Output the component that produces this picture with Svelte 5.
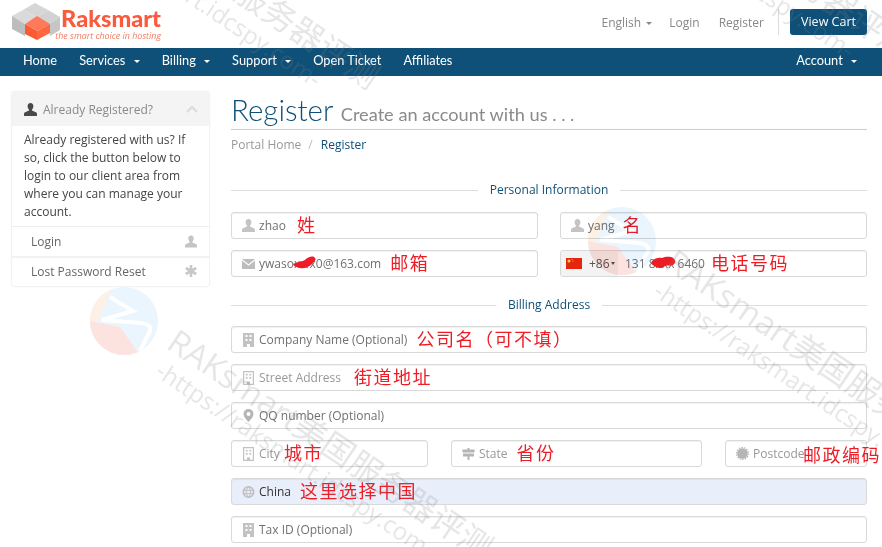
<script>
	// watermark stamps, x/y = top-left of the rotated block on the page
	const stamps = [
		{ x: 183, y: 321 },
		{ x: 681, y: 241 },
		{ x: 70, y: -150 },
		{ x: 603, y: -179 }
	];
</script>

<div class="page">
	<header class="top">
		<a class="logo" href="#home">
			<svg width="48" height="40" viewBox="0 3 48 40">
				<path d="M23 3 L36 10 L25 17 L11 10Z" fill="#d6d6d6" />
				<path d="M11 10 L25 17 L13 24 L0 16Z" fill="#dadada" />
				<path d="M36 10 L48 17 L37 24 L25 17Z" fill="#d2d2d2" />
				<path d="M0 16 L13 24 V36 L0 29Z" fill="#bdbdbd" />
				<path d="M37 24 L48 17 V30 L38 36Z" fill="#c6c6c6" />
				<path d="M25 16 L38 24 L25 31 L13 24Z" fill="#ff7a58" />
				<path d="M13 24 L25 31 V40 L13 34Z" fill="#fa5a34" />
				<path d="M38 24 L25 31 V40 L38 33Z" fill="#ff6641" />
			</svg>
			<span class="logo-text">
				<span class="brand">Raksmart</span>
				<span class="tagline">the smart choice in hosting</span>
			</span>
		</a>
		<nav class="toplinks">
			<a href="#lang">English <i class="caret grey"></i></a>
			<a class="login" href="#login">Login</a>
			<a href="#register">Register</a>
			<span class="divider"></span>
			<a class="cart" href="#cart">View Cart</a>
		</nav>
	</header>

	<nav class="mainnav">
		<a href="#home">Home</a>
		<a href="#services">Services <i class="caret"></i></a>
		<a href="#billing">Billing <i class="caret"></i></a>
		<a href="#support">Support <i class="caret"></i></a>
		<a href="#ticket">Open Ticket</a>
		<a href="#affiliates">Affiliates</a>
		<a class="account" href="#account">Account <i class="caret"></i></a>
	</nav>

	<div class="content">
		<aside class="sidebar">
			<div class="panel-head">
				<svg class="head-user" width="13" height="13" viewBox="0 0 13 13"><path d="M6.500 0C4.600 0 3.600 1.400 3.600 3.200c0 1.300.6 2.600 1.400 3.300v1L.6 9.600C0 10 0 11 0 13h13c0-2 0-3-.6-3.400L8 7.500v-1c.8-.7 1.400-2 1.400-3.300C9.400 1.400 8.400 0 6.500 0z" fill="#4a4a4a"/></svg>
				<span>Already Registered?</span>
				<svg class="chev" width="12" height="8" viewBox="0 0 12 8"><path d="M1 7 L6 2 L11 7" fill="none" stroke="#dcdcdc" stroke-width="2.400"/></svg>
			</div>
			<p class="panel-body">Already registered with us? If so, click the button below to login to our client area from where you can manage your account.</p>
			<a class="panel-row" href="#login">
				Login
				<svg width="12" height="13" viewBox="0 0 13 13"><use href="#i-user" /></svg>
			</a>
			<a class="panel-row" href="#reset">
				Lost Password Reset
				<svg width="12" height="12" viewBox="0 0 12 12"><path d="M6 0v12M.8 3l10.400 6M11.200 3L.8 9" stroke="#c8c8c8" stroke-width="2.600"/></svg>
			</a>
		</aside>

		<main class="main">
			<h1 class="title">Register <small>Create an account with us . . .</small></h1>
			<div class="crumbs"><a href="#home">Portal Home</a><span class="sep">/</span><span class="current">Register</span></div>

			<h2 class="legend personal"><span>Personal Information</span></h2>
			<div class="two">
				<div class="field"><svg class="ic" height="13" viewBox="0 0 13 13"><use href="#i-user" /></svg><span class="val">zhao</span><span class="note zhao-note">姓</span></div>
				<div class="field"><svg class="ic" height="13" viewBox="0 0 13 13"><use href="#i-user" /></svg><span class="val">yang</span><span class="note yang-note">名</span></div>
				<div class="field">
					<svg class="ic" height="10" viewBox="0 0 13 10"><path d="M0 0h13L6.500 5.200z M0 1.500V10h13V1.500L6.500 6.800z" fill="#bdbdbd"/></svg>
					<span class="val masked">ywasoxwx0@163.com
						<svg class="blob mail" width="26" height="14" viewBox="0 0 26 14"><path d="M1 8C5 6 9 6 13 4c3-3 8-5 10-2 2 2-2 4-3 6-3 3-8 5-12 4-3-1-6-1-7-4z" fill="#ee1c25"/></svg>
					</span>
					<span class="note">邮箱</span>
				</div>
				<div class="field phone">
					<span class="dial">
						<svg width="16" height="11" viewBox="0 0 16 11"><rect width="16" height="11" fill="#e5260e"/><circle cx="3" cy="3" r="1.500" fill="#ffd83a"/><circle cx="6" cy="1.500" r=".5" fill="#ffd83a"/><circle cx="7" cy="3" r=".5" fill="#ffd83a"/></svg>
						<span class="code">+86</span><i class="caret tiny"></i>
					</span>
					<span class="val masked">131 8xxx 6460
						<svg class="blob tel" width="27" height="14" viewBox="0 0 27 14"><path d="M2 5c3-3 7-4 10-3 3-1 8-2 11 0 3 2 3 5 0 7-3 1-5 0-8 1-2 2-6 3-9 1C3 9 0 8 2 5z" fill="#ee1c25"/></svg>
					</span>
					<span class="note tel-note">电话号码</span>
				</div>
			</div>

			<h2 class="legend billing"><span>Billing Address</span></h2>
			<div class="stack">
				<div class="field"><svg class="ic" height="14" viewBox="0 0 11 14"><use href="#i-building" /></svg><span class="val">Company Name (Optional)</span><span class="note">公司名（可不填）</span></div>
				<div class="field"><svg class="ic" height="14" viewBox="0 0 11 14"><use href="#i-building-o" /></svg><span class="val ph">Street Address</span><span class="note street-note">街道地址</span></div>
				<div class="field"><svg class="ic" height="13" viewBox="0 0 10 13"><path d="M5 0a5 5 0 0 0-5 5c0 2.600 3.500 6.500 5 8 1.500-1.500 5-5.400 5-8a5 5 0 0 0-5-5zm0 7a2 2 0 1 1 0-4 2 2 0 0 1 0 4z" fill="#b5b5b5"/></svg><span class="val">QQ number (Optional)</span></div>
				<div class="three">
					<div class="field"><svg class="ic" height="14" viewBox="0 0 11 14"><use href="#i-building-o" /></svg><span class="val ph">City</span><span class="note city-note">城市</span></div>
					<div class="field"><svg class="ic" height="12" viewBox="0 0 13 12"><path d="M5.500 0h2v1.500H12L13 3l-1 1.500H1L0 3l1-1.500h4.500zM1 5.500h11V8.500H7.500V12h-2V8.500H1z" fill="#b5b5b5"/></svg><span class="val ph">State</span><span class="note">省份</span></div>
					<div class="field"><svg class="ic" height="13" viewBox="0 0 13 13"><circle cx="6.500" cy="6.500" r="5.300" fill="#b5b5b5"/><circle cx="6.500" cy="6.500" r="5.900" fill="none" stroke="#b5b5b5" stroke-width="1.200" stroke-dasharray="1.500 1.100"/></svg><span class="val ph">Postcode</span><span class="note post-note">邮政编码</span></div>
				</div>
				<div class="field filled">
					<svg class="ic" height="12" viewBox="0 0 12 12"><circle cx="6" cy="6" r="5.200" fill="none" stroke="#bdbdbd" stroke-width="1.500"/><path d="M1 4.300h10M1 7.700h10M6 1c-3 3-3 7 0 10M6 1c3 3 3 7 0 10" fill="none" stroke="#bdbdbd" stroke-width="1"/></svg>
					<span class="val dark">China</span><span class="note">这里选择中国</span>
				</div>
				<div class="field"><svg class="ic" height="14" viewBox="0 0 11 14"><use href="#i-building" /></svg><span class="val">Tax ID (Optional)</span></div>
			</div>
		</main>
	</div>

	<div class="marks" aria-hidden="true">
		{#each stamps as s}
			<svg class="mark-logo" width="68" height="68" viewBox="0 0 68 68" style="left:{s.x - 93}px;top:{s.y - 34}px">
				<clipPath id="round"><circle cx="34" cy="34" r="34"/></clipPath>
				<g clip-path="url(#round)">
					<rect width="68" height="68" fill="#eaf5fd"/>
					<path d="M0 0h22L8 34 0 38z" fill="#fdf1e6"/>
					<path d="M0 34 L30 40 50 68H0z" fill="#fce3df"/>
					<path d="M20 10L43 24L12 33L52 36Q62 38 60 44L50 64" stroke="#fff" stroke-width="4" fill="none"/>
				</g>
			</svg>
			<div class="stamp" style="left:{s.x}px;top:{s.y}px">
				<div class="stamp-a">RAKsmart美国服务器评测</div>
				<div class="stamp-b">-https://raksmart.idcspy.com-</div>
			</div>
		{/each}
	</div>

	<svg class="defs" width="0" height="0">
		<defs>
			<path id="i-user" d="M6.500 0C4.600 0 3.600 1.400 3.600 3.200c0 1.300.6 2.600 1.400 3.300v1L.6 9.600C0 10 0 11 0 13h13c0-2 0-3-.6-3.400L8 7.500v-1c.8-.7 1.400-2 1.400-3.300C9.400 1.400 8.400 0 6.500 0z" fill="#c4c4c4"/>
			<path id="i-building" fill-rule="evenodd" d="M0 0h11v14H7v-3H4v3H0zM2.500 2v2h2V2zM6.500 2v2h2V2zM2.500 6v2h2V6zM6.500 6v2h2V6z" fill="#c2c2c2"/>
			<path id="i-building-o" fill-rule="evenodd" d="M0 0h11v14H0zM1.200 1.200v11.600h2.800V10.500h3v2.300h2.800V1.200zM2.800 2.800h1.800v1.800H2.800zM6.400 2.800h1.800v1.800H6.400zM2.800 6h1.800v1.800H2.800zM6.400 6h1.800v1.800H6.400z" fill="#c2c2c2"/>
		</defs>
	</svg>
</div>

<style>
	:global(body) {
		background: #fff;
		font-family: "Open Sans", "Noto Sans", sans-serif;
		color: #333;
	}
	a {
		text-decoration: none;
		color: inherit;
	}
	.page {
		position: relative;
		height: 547px;
		overflow: hidden;
	}
	.defs {
		position: absolute;
	}

	.top {
		height: 48px;
		display: flex;
		justify-content: space-between;
		align-items: flex-start;
		padding: 0 15px 0 12px;
		box-sizing: border-box;
	}
	.logo {
		display: flex;
		align-items: flex-start;
		padding-top: 3px;
	}
	.logo-text {
		display: flex;
		flex-direction: column;
		align-items: flex-end;
		width: 107px;
		margin-left: -6px;
		margin-top: 3px;
	}
	.brand {
		font-family: Lato, sans-serif;
		font-weight: 900;
		font-size: 23.500px;
		line-height: 24px;
		color: #fb5a3c;
	}
	.tagline {
		font-style: italic;
		font-size: 8.900px;
		line-height: 11px;
		color: #f47a5e;
		white-space: nowrap;
	}
	.toplinks {
		display: flex;
		align-items: center;
		margin-top: 9px;
		font-size: 12px;
		color: #888;
	}
	.toplinks > a {
		margin-left: 19px;
	}
	.toplinks > a:first-child {
		margin-left: 0;
	}
	.toplinks > .login {
		margin-left: 17px;
	}
	.divider {
		width: 1px;
		height: 26px;
		background: #ddd;
		margin-left: 14px;
	}
	.toplinks .cart {
		margin-left: 11px;
		background: #0f5078;
		color: #fff;
		border-radius: 3px;
		height: 26px;
		line-height: 26px;
		width: 77px;
		text-align: center;
		font-size: 12.500px;
	}

	.caret {
		display: inline-block;
		width: 0;
		height: 0;
		border-top: 3px solid #fff;
		border-left: 3px solid transparent;
		border-right: 3px solid transparent;
		vertical-align: middle;
		margin-left: 2px;
	}
	.caret.grey {
		border-top-color: #888;
	}
	.caret.tiny {
		border-top-color: #555;
		margin-left: 1px;
		border-left-width: 2.500px;
		border-right-width: 2.500px;
	}

	.mainnav {
		height: 28px;
		box-sizing: border-box;
		padding: 0 25px 4px 23px;
		background: #0f5078;
		color: #fff;
		display: flex;
		align-items: center;
		font-family: Lato, sans-serif;
		font-size: 12.800px;
	}
	.mainnav a {
		margin-right: 22px;
		white-space: nowrap;
	}
	.mainnav .caret {
		margin-left: 5px;
	}
	.mainnav .account {
		margin: 0 0 0 auto;
	}

	.content {
		display: flex;
		align-items: flex-start;
		padding: 16px 15px 0 12px;
		gap: 22px;
	}

	.sidebar {
		width: 197px;
		flex: none;
		background: #fff;
		box-shadow: 0 0 2px rgba(0, 0, 0, 0.2);
		border-radius: 2px;
		font-size: 12px;
	}
	.panel-head {
		height: 34px;
		background: #f4f4f4;
		display: flex;
		align-items: center;
		padding: 0 12px;
		color: #8a8a8a;
		box-sizing: border-box;
	}
	.head-user {
		margin-right: 6px;
	}
	.chev {
		margin-left: auto;
		margin-right: -1px;
	}
	.panel-body {
		margin: 0;
		padding: 5px 12px 5px;
		line-height: 18px;
		color: #444;
		border-bottom: 1px solid #eee;
	}
	.panel-row {
		height: 29px;
		display: flex;
		justify-content: space-between;
		align-items: center;
		padding: 0 12px 0 19px;
		color: #666;
		box-sizing: border-box;
	}
	.panel-row + .panel-row {
		height: 30px;
		padding-bottom: 2px;
		border-top: 2px solid #f2f2f2;
	}

	.main {
		flex: 1;
		min-width: 0;
	}
	.title {
		margin: 0;
		height: 37px;
		line-height: 36px;
		font-family: Lato, sans-serif;
		font-weight: 300;
		font-size: 29.500px;
		color: #0f5078;
		border-bottom: 1px solid #ccc;
		white-space: nowrap;
		box-sizing: content-box;
	}
	.title small {
		font-size: 18.200px;
		font-weight: 400;
		color: #8a8a8a;
	}
	.crumbs {
		font-size: 12px;
		line-height: 16px;
		margin-top: 7px;
		color: #999;
	}
	.sep {
		margin: 0 8px 0 7px;
		color: #bbb;
	}
	.current {
		color: #0f5078;
	}

	.legend {
		display: flex;
		align-items: center;
		gap: 12px;
		margin: 0;
		font-weight: 400;
		font-size: 12px;
		line-height: 16px;
		color: #0f5078;
		white-space: nowrap;
	}
	.legend::before,
	.legend::after {
		content: "";
		flex: 1;
		height: 1px;
		background: #ddd;
	}
	.personal {
		margin-top: 29px;
		margin-bottom: 14px;
	}
	.billing {
		margin-top: 20px;
		margin-bottom: 13px;
	}

	.two {
		display: grid;
		grid-template-columns: 307px 307px;
		justify-content: space-between;
		row-gap: 11px;
	}
	.stack {
		display: flex;
		flex-direction: column;
		gap: 11px;
	}
	.three {
		display: grid;
		grid-template-columns: 197px 251px 142px;
		justify-content: space-between;
	}

	.field {
		position: relative;
		display: flex;
		align-items: center;
		height: 27px;
		box-sizing: border-box;
		border: 1px solid #d9d9d9;
		border-radius: 3px;
		box-shadow: inset 0 1px 1px rgba(0, 0, 0, 0.06);
		padding-left: 10px;
		font-size: 12px;
		color: #666;
		white-space: nowrap;
	}
	.ic {
		flex: none;
		width: 13px;
		margin-right: 4px;
	}
	.val {
		color: #707070;
	}
	.val.ph {
		color: #999;
	}
	.val.dark {
		color: #333;
	}
	.note {
		margin-left: 9px;
		padding-bottom: 4px;
		font-family: "Noto Sans CJK SC", sans-serif;
		font-size: 18px;
		line-height: 20px;
		letter-spacing: 1.500px;
		color: #ee1c25;
	}
	.zhao-note {
		margin-left: 11px;
	}
	.yang-note {
		margin-left: 8px;
	}
	.street-note {
		margin-left: 13px;
	}
	.city-note {
		margin-left: 4px;
	}
	.tel-note {
		margin-left: 6px;
	}
	.post-note {
		position: absolute;
		left: 77px;
		top: 3px;
		margin: 0;
		padding: 0;
	}
	.masked {
		position: relative;
	}
	.blob {
		position: absolute;
	}
	.blob.mail {
		left: 33px;
		top: 1px;
	}
	.blob.tel {
		left: 25px;
		top: 1px;
	}
	.filled {
		background: #e8eefa;
	}

	.phone {
		padding-left: 0;
	}
	.dial {
		height: 100%;
		width: 57px;
		flex: none;
		display: flex;
		align-items: center;
		background: #f3f3f3;
		padding-left: 5px;
		box-sizing: border-box;
		margin-right: 7px;
		border-radius: 3px 0 0 3px;
	}
	.code {
		margin-left: 7px;
		color: #555;
	}

	.marks {
		position: absolute;
		inset: 0;
		pointer-events: none;
	}
	.mark-logo {
		position: absolute;
		mix-blend-mode: multiply;
	}
	.stamp {
		position: absolute;
		transform: rotate(34deg);
		transform-origin: 0 0;
		white-space: nowrap;
		color: rgba(128, 128, 128, 0.2);
		font-family: "Open Sans", "Noto Sans CJK SC", sans-serif;
	}
	.stamp-a {
		font-size: 33px;
		line-height: 40px;
	}
	.stamp-b {
		font-size: 24px;
		line-height: 24px;
		margin-left: 6px;
	}
</style>
